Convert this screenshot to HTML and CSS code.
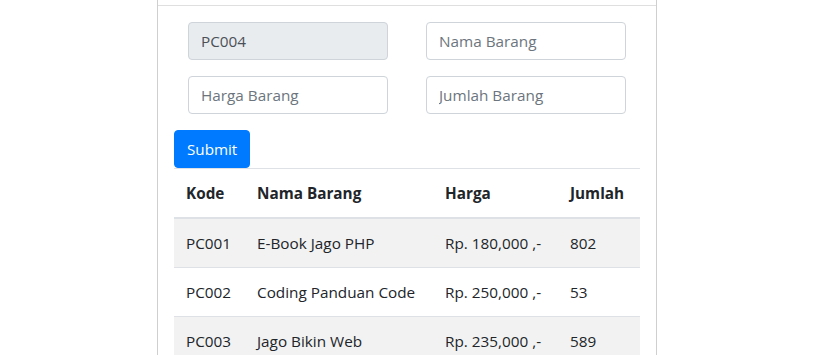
FILE: index.html
```html
<!DOCTYPE html>
<html>
<head>
  <title>Data Barang</title>
  <link rel="stylesheet" href="styles.css">
</head>
<body>
  <div class="card">
    <div class="card-header"></div>
    <div class="card-body">
      <form class="form-barang">
        <div class="form-grid">
          <input type="text" class="form-control" value="PC004" disabled>
          <input type="text" class="form-control" placeholder="Nama Barang">
          <input type="text" class="form-control" placeholder="Harga Barang">
          <input type="text" class="form-control" placeholder="Jumlah Barang">
        </div>
        <button type="button" class="btn-submit">Submit</button>
      </form>

      <table class="table-barang">
        <thead>
          <tr>
            <th class="col-kode">Kode</th>
            <th class="col-nama">Nama Barang</th>
            <th class="col-harga">Harga</th>
            <th class="col-jumlah">Jumlah</th>
          </tr>
        </thead>
        <tbody>
          <tr>
            <td>PC001</td>
            <td>E-Book Jago PHP</td>
            <td>Rp. 180,000 ,-</td>
            <td>802</td>
          </tr>
          <tr>
            <td>PC002</td>
            <td>Coding Panduan Code</td>
            <td>Rp. 250,000 ,-</td>
            <td>53</td>
          </tr>
          <tr>
            <td>PC003</td>
            <td>Jago Bikin Web</td>
            <td>Rp. 235,000 ,-</td>
            <td>589</td>
          </tr>
        </tbody>
      </table>
    </div>
  </div>
</body>
</html>
```

FILE: styles.css
```css
/* Data barang */

* {
  box-sizing: border-box;
}

body {
  margin: 0;
  background: #fff;
  color: #212529;
  font-family: "Open Sans", "Noto Sans", sans-serif;
  font-size: 15.3px;
  line-height: 24px;
}

.card {
  width: 500px;
  margin-left: 157px;
  border: 1px solid #cfcfcf;
  border-top: none;
}

.card-header {
  height: 6px;
  border-bottom: 1px solid #dfdfdf;
}

.card-body {
  padding: 16px;
}

.form-grid {
  display: grid;
  grid-template-columns: 200px 200px;
  column-gap: 38px;
  row-gap: 16px;
  padding: 0 14px;
}

.form-control {
  display: block;
  width: 100%;
  height: 38px;
  padding: 6px 12px;
  font-family: inherit;
  font-size: 15.3px;
  line-height: 24px;
  color: #495057;
  background: #fff;
  border: 1px solid #ced4da;
  border-radius: 4px;
}

.form-control::placeholder {
  color: #6c757d;
}

.form-control:disabled {
  background: #e9ecef;
}

.btn-submit {
  display: block;
  margin-top: 16px;
  height: 38px;
  padding: 6px 12px;
  font-family: inherit;
  font-size: 15.2px;
  line-height: 24px;
  color: #fff;
  background: #007bff;
  border: 1px solid #007bff;
  border-radius: 4px;
}

.table-barang {
  width: 100%;
  border-collapse: collapse;
  table-layout: fixed;
}

.table-barang th,
.table-barang td {
  padding: 12px;
  text-align: left;
  vertical-align: top;
  border-top: 1px solid #dee2e6;
  white-space: nowrap;
}

.table-barang thead th {
  font-weight: bold;
  border-bottom: 2px solid #dee2e6;
}

.table-barang tbody tr:nth-child(odd) {
  background: #f2f2f2;
}

.col-kode { width: 71px; }
.col-nama { width: 188px; }
.col-harga { width: 125px; }
.col-jumlah { width: 82px; }
```
